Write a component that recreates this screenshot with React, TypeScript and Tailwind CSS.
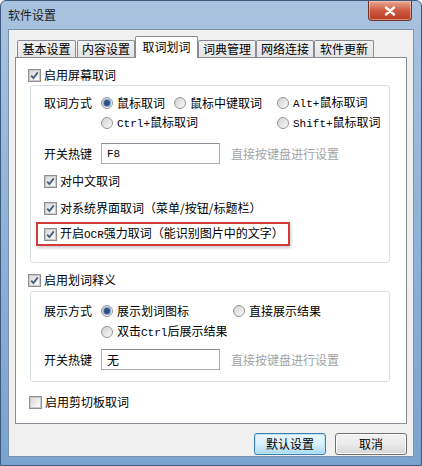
import React from "react";

function Mono({ children }: { children: React.ReactNode }) {
  return <span className="font-['Liberation_Mono',monospace] text-[11px]">{children}</span>;
}

function Checkbox({ checked }: { checked?: boolean }) {
  return (
    <span className="flex h-[13px] w-[13px] shrink-0 items-center justify-center border border-[#8e8f8f] bg-white">
      <span className="flex h-[11px] w-[11px] items-center justify-center border border-[#c9cbcf] bg-gradient-to-br from-[#dadada] to-[#fbfbfb]">
        {checked && (
          <svg width="9" height="9" viewBox="0 0 9 9">
            <path d="M1.2 4.6 L3.4 7 L7.8 1.4" fill="none" stroke="#4a5f80" strokeWidth="1.8" />
          </svg>
        )}
      </span>
    </span>
  );
}

function Radio({ checked }: { checked?: boolean }) {
  return (
    <span className="flex h-[12px] w-[12px] shrink-0 items-center justify-center rounded-full border border-[#959595] bg-gradient-to-br from-[#d2d2d2] to-[#fafafa]">
      {checked && (
        <span className="h-[6px] w-[6px] rounded-full bg-[#2d4f86] shadow-[0_0_0_1px_#7fa6d8]" />
      )}
    </span>
  );
}

function CheckRow({ checked, children }: { checked?: boolean; children: React.ReactNode }) {
  return (
    <div className="flex h-[16px] items-center gap-[3px]">
      <Checkbox checked={checked} />
      <span>{children}</span>
    </div>
  );
}

function RadioOpt({ checked, children }: { checked?: boolean; children: React.ReactNode }) {
  return (
    <div className="flex items-center gap-[4px]">
      <Radio checked={checked} />
      <span className="whitespace-nowrap">{children}</span>
    </div>
  );
}

function HotkeyRow({ value }: { value: React.ReactNode }) {
  return (
    <div className="flex h-[21px] items-center">
      <span className="w-[57px]">开关热键</span>
      <div className="flex h-[21px] w-[119px] items-center border border-[#abadb3] border-t-[#8b8e96] bg-white pl-[5px]">
        {value}
      </div>
      <span className="ml-[11px] text-[#a3a3a3]">直接按键盘进行设置</span>
    </div>
  );
}

const tabs = [
  { label: "基本设置", ml: "ml-[2px]", w: "w-[59px]" },
  { label: "内容设置", ml: "ml-[1px]", w: "w-[58px]" },
  { label: "取词划词", ml: "ml-0", w: "w-[63px]", active: true },
  { label: "词典管理", ml: "ml-0", w: "w-[58px]" },
  { label: "网络连接", ml: "ml-0", w: "w-[58px]" },
  { label: "软件更新", ml: "ml-0", w: "w-[60px]" },
];

export default function App() {
  return (
    <div className="h-[466px] w-[422px] overflow-hidden rounded-t-[6px] border border-[#3c5a7e] bg-gradient-to-b from-[#a9c3df] via-[#8fb2d8] to-[#7aa3cf] font-['Noto_Sans_CJK_SC',sans-serif] text-[12px] leading-[14px] text-black">
      {/* title bar */}
      <div className="flex h-[28px]">
        <span className="pl-[7px] pt-[7px] text-[12px] text-[#1b1b1b]">软件设置</span>
        <div className="ml-auto mr-[9px] flex h-[20px] w-[44px] items-center justify-center rounded-b-[4px] border border-t-0 border-[#6e3429] bg-gradient-to-b from-[#e7a897] via-[#cf5a40] to-[#b73c22] shadow-[inset_0_0_0_1px_rgba(255,220,200,0.5)]">
          <svg width="12" height="10" viewBox="0 0 12 10">
            <path d="M2 1.5 L10 8.5 M10 1.5 L2 8.5" stroke="#fff" strokeWidth="2.4" strokeLinecap="round" />
          </svg>
        </div>
      </div>

      {/* client */}
      <div className="mx-[7px] flex h-[428px] flex-col border border-[#7a92ad] bg-[#f0f0f0] px-[6px]">
        {/* tabs */}
        <div className="flex h-[27px] items-end pt-[6px]">
          {tabs.map((t) =>
            t.active ? (
              <div
                key={t.label}
                className={`${t.ml} ${t.w} relative z-10 -mb-px flex h-[22px] items-center justify-center rounded-t-[2px] border border-b-0 border-[#898c95] bg-white pb-[2px]`}
              >
                {t.label}
              </div>
            ) : (
              <div
                key={t.label}
                className={`${t.ml} ${t.w} flex h-[17px] items-center justify-center rounded-t-[2px] border border-b-0 border-[#898c95] bg-gradient-to-b from-[#f2f2f2] to-[#e3e3e3]`}
              >
                {t.label}
              </div>
            )
          )}
        </div>

        {/* panel */}
        <div className="h-[367px] border border-[#898c95] bg-white pl-[12px] pt-[9px]">
          <CheckRow checked>启用屏幕取词</CheckRow>

          <div className="ml-[2px] mt-[2px] flex h-[178px] w-[360px] flex-col rounded-[3px] border border-[#d5dfe5] pl-[13px] pt-[7px]">
            <div className="flex">
              <span className="flex h-[20px] w-[57px] items-center">取词方式</span>
              <div className="grid grid-cols-[73px_103px_auto] grid-rows-[20px_20px] items-center">
                <RadioOpt checked>鼠标取词</RadioOpt>
                <RadioOpt>鼠标中键取词</RadioOpt>
                <RadioOpt>
                  <Mono>Alt+</Mono>鼠标取词
                </RadioOpt>
                <RadioOpt>
                  <Mono>Ctrl+</Mono>鼠标取词
                </RadioOpt>
                <span />
                <RadioOpt>
                  <Mono>Shift+</Mono>鼠标取词
                </RadioOpt>
              </div>
            </div>
            <div className="mt-[10px]">
              <HotkeyRow value={<Mono>F8</Mono>} />
            </div>
            <div className="mt-[9px]">
              <CheckRow checked>对中文取词</CheckRow>
            </div>
            <div className="mt-[11px]">
              <CheckRow checked>对系统界面取词（菜单/按钮/标题栏）</CheckRow>
            </div>
            <div className="-ml-[8px] mt-[6px] flex h-[24px] w-[254px] items-center border-2 border-[#d33a3a] pl-[6px] shadow-[1px_2px_3px_rgba(0,0,0,0.2)]">
              <CheckRow checked>
                开启<Mono>OCR</Mono>强力取词（能识别图片中的文字）
              </CheckRow>
            </div>
          </div>

          <div className="mt-[9px]">
            <CheckRow checked>启用划词释义</CheckRow>
          </div>

          <div className="ml-[2px] mt-[3px] flex h-[91px] w-[360px] flex-col rounded-[3px] border border-[#d5dfe5] pl-[13px] pt-[8px]">
            <div className="flex">
              <span className="flex h-[21px] w-[57px] items-center">展示方式</span>
              <div className="grid grid-cols-[132px_auto] grid-rows-[21px_21px] items-center">
                <RadioOpt checked>展示划词图标</RadioOpt>
                <RadioOpt>直接展示结果</RadioOpt>
                <RadioOpt>
                  双击<Mono>Ctrl</Mono>后展示结果
                </RadioOpt>
              </div>
            </div>
            <div className="mt-[7px]">
              <HotkeyRow value="无" />
            </div>
          </div>

          <div className="ml-[1px] mt-[12px]">
            <CheckRow>启用剪切板取词</CheckRow>
          </div>
        </div>

        {/* buttons */}
        <div className="mt-[9px] flex justify-end gap-[9px]">
          <button className="flex h-[22px] w-[72px] items-center justify-center rounded-[3px] border border-[#3c7fb1] bg-gradient-to-b from-[#eaf6fd] via-[#d9f0fc] to-[#a7d9f5] shadow-[inset_0_0_0_1px_#b8e3f8]">
            默认设置
          </button>
          <button className="flex h-[22px] w-[72px] items-center justify-center rounded-[3px] border border-[#707070] bg-gradient-to-b from-[#f2f2f2] via-[#ebebeb] to-[#d5d5d5] shadow-[inset_0_0_0_1px_#fcfcfc]">
            取消
          </button>
        </div>
      </div>
    </div>
  );
}
